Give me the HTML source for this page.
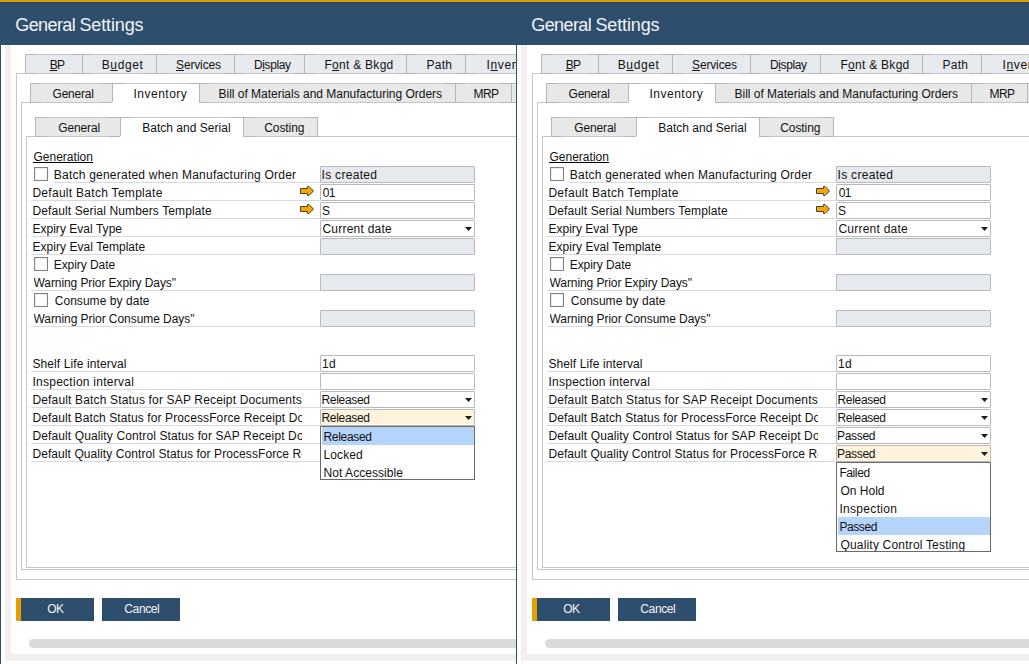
<!DOCTYPE html>
<html><head><meta charset="utf-8"><title>General Settings</title>
<style>
html,body{margin:0;padding:0;background:#fff;}
body{width:1029px;height:664px;overflow:hidden;position:relative;font-family:"Liberation Sans",sans-serif;font-size:12px;color:#121212;}
.dlg{position:absolute;top:0;height:664px;overflow:hidden;background:#fff;}
.dlg *{position:absolute;box-sizing:border-box;white-space:pre;}
.dlg u{position:static;}
.ob0{left:0;top:0;width:600px;height:1px;background:#de9b00;}
.ob1{left:0;top:1px;width:600px;height:1px;background:#e7a100;}
.tb0{left:0;top:2px;width:600px;height:1px;background:#24476e;}
.tbar{left:0;top:3px;width:600px;height:42px;background:#2d4e6c;}
.lb{left:0;top:45px;width:1px;height:619px;background:#2d4e6c;}
.gl{left:5px;top:45px;width:6px;height:616px;background:#f0f0f0;}
.gb{left:5px;top:654px;width:600px;height:7px;background:#f0f0f0;}
.fr{border:1px solid #c6c6c6;border-right:none;width:600px;background:#fff;}
.tab{height:20px;border:1px solid #c6c6c6;border-left-color:#b6b6b6;border-right-color:#b6b6b6;}
.tab::before,.tab::after{content:"";position:absolute;top:-1px;height:20px;box-sizing:border-box;border-top:1px solid #b6b6b6;border-bottom:1px solid #b6b6b6;}
.tab::before{left:-1px;width:11px;}
.tab::after{right:-1px;width:12px;}
.tab.act::before,.tab.act::after{border-bottom-color:#fff;}
.t1{top:54px;background:#e6eaee;}
.t2{top:83px;background:#e8e8e8;}
.t3{top:117px;background:#e8e8e8;}
.tab.act{background:#fff;border-bottom-color:#fff;}
.ul{left:31px;width:289px;height:1px;background:#d6dade;}
.cb{left:34px;width:14px;height:14px;border:1px solid #828282;background:#fff;box-shadow:inset 1px 1px 0 #ececec,inset -1px -1px 0 #f4f4f4;}
.fld{left:320px;width:155px;height:17px;border:1px solid #b6baba;background:#fff;border-radius:1px;}
.fld.dis{background:#e6eaee;}
.fld.foc{background:#fdf3dd;}
.dd{left:465px;width:7px;height:4px;}
.list{left:320px;width:155px;border:1px solid #6a6a6a;background:#fff;}
.sel{left:322px;width:152px;height:18px;background:#b4d4fa;}
.btn{top:598px;height:23px;width:78px;background:#2d4e6c;}
.sb{left:29px;top:639px;width:600px;height:9px;border-radius:4.5px;background:#dadada;}
.arw{left:300px;width:14px;height:10px;}
</style></head><body>
<div class="dlg" style="left:0;width:516px"><div class="ob0"></div><div class="ob1"></div><div class="tb0"></div><div class="tbar"></div><div class="x" style="left:15.30px;top:15px;line-height:20px;height:20px;letter-spacing:-0.600px;font-size:18px;color:#f1f3f5;">General</div><div class="x" style="left:79.40px;top:15px;line-height:20px;height:20px;letter-spacing:-0.129px;font-size:18px;color:#f1f3f5;">Settings</div><div class="lb"></div><div class="gl"></div><div class="gb"></div><div class="fr" style="left:16px;top:73px;height:507px"></div><div class="tab t1" style="left:25px;width:58px"></div><div class="tab t1" style="left:82px;width:75px"></div><div class="tab t1" style="left:156px;width:79px"></div><div class="tab t1" style="left:234px;width:71px"></div><div class="tab t1" style="left:304px;width:103px"></div><div class="tab t1" style="left:406px;width:60px"></div><div class="tab t1" style="left:465px;width:96px"></div><div class="x" style="left:49.70px;top:58px;line-height:14px;height:14px;letter-spacing:-0.600px;"><u>B</u>P</div><div class="x" style="left:101.75px;top:58px;line-height:14px;height:14px;letter-spacing:0.600px;">B<u>u</u>dget</div><div class="x" style="left:176.00px;top:58px;line-height:14px;height:14px;letter-spacing:-0.143px;"><u>S</u>ervices</div><div class="x" style="left:254.00px;top:58px;line-height:14px;height:14px;letter-spacing:-0.375px;">D<u>i</u>splay</div><div class="x" style="left:324.50px;top:58px;line-height:14px;height:14px;letter-spacing:0.270px;">F<u>o</u>nt &amp; Bkgd</div><div class="x" style="left:426.50px;top:58px;line-height:14px;height:14px;letter-spacing:0.267px;">Path</div><div class="x" style="left:486.60px;top:58px;line-height:14px;height:14px;letter-spacing:0.600px;">I<u>n</u>ventory</div><div class="fr" style="left:21px;top:102px;height:468px"></div><div class="tab t2" style="left:30px;width:83px"></div><div class="tab t2 act" style="left:112px;width:88px"></div><div class="tab t2" style="left:199px;width:257px"></div><div class="tab t2" style="left:455px;width:57px"></div><div class="tab t2" style="left:511px;width:90px"></div><div class="x" style="left:52.50px;top:87px;line-height:14px;height:14px;letter-spacing:-0.208px;">General</div><div class="x" style="left:133.50px;top:87px;line-height:14px;height:14px;letter-spacing:0.500px;">Inventory</div><div class="x" style="left:218.50px;top:87px;line-height:14px;height:14px;letter-spacing:-0.012px;">Bill of Materials and Manufacturing Orders</div><div class="x" style="left:473.60px;top:87px;line-height:14px;height:14px;letter-spacing:-0.600px;">MRP</div><div class="fr" style="left:26px;top:136px;height:432px"></div><div class="tab t3" style="left:35px;width:86px"></div><div class="tab t3 act" style="left:120px;width:124px"></div><div class="tab t3" style="left:243px;width:75px"></div><div class="x" style="left:58.25px;top:121px;line-height:14px;height:14px;letter-spacing:-0.125px;">General</div><div class="x" style="left:142.25px;top:121px;line-height:14px;height:14px;letter-spacing:0.017px;">Batch and Serial</div><div class="x" style="left:264.25px;top:121px;line-height:14px;height:14px;letter-spacing:-0.083px;">Costing</div><div class="x" style="left:33.40px;top:150px;line-height:14px;height:14px;letter-spacing:0.022px;">Generation</div><div style="left:33px;top:162px;width:60px;height:1px;background:#000"></div><div class="cb" style="top:167px"></div><div class="x" style="left:53.80px;top:168px;line-height:14px;height:14px;letter-spacing:0.226px;width:248.20px;overflow:hidden;">Batch generated when Manufacturing Order</div><div class="ul" style="top:182px;left:54px;width:266px"></div><div class="fld dis" style="top:166px"></div><div class="x" style="left:321.50px;top:168px;line-height:14px;height:14px;letter-spacing:0.306px;">Is created</div><div class="x" style="left:32.40px;top:186px;line-height:14px;height:14px;letter-spacing:0.290px;width:269.60px;overflow:hidden;">Default Batch Template</div><div class="ul" style="top:200px"></div><div class="fld " style="top:184px"></div><div class="x" style="left:322.65px;top:186px;line-height:14px;height:14px;letter-spacing:-0.600px;">01</div><div class="x" style="left:32.40px;top:204px;line-height:14px;height:14px;letter-spacing:0.113px;width:269.60px;overflow:hidden;">Default Serial Numbers Template</div><div class="ul" style="top:218px"></div><div class="fld " style="top:202px"></div><div class="x" style="left:322.00px;top:204px;line-height:14px;height:14px;letter-spacing:0.000px;">S</div><div class="x" style="left:32.40px;top:222px;line-height:14px;height:14px;letter-spacing:0.033px;width:269.60px;overflow:hidden;">Expiry Eval Type</div><div class="ul" style="top:236px"></div><div class="fld " style="top:220px"></div><div class="x" style="left:322.40px;top:222px;line-height:14px;height:14px;letter-spacing:0.245px;">Current date</div><svg class="dd" style="top:227px" viewBox="0 0 7 4"><path d="M0 0H7L3.5 4Z" fill="#1c1c1c"/></svg><div class="x" style="left:32.50px;top:240px;line-height:14px;height:14px;letter-spacing:0.042px;width:269.50px;overflow:hidden;">Expiry Eval Template</div><div class="ul" style="top:254px"></div><div class="fld dis" style="top:238px"></div><div class="cb" style="top:257px"></div><div class="x" style="left:53.70px;top:258px;line-height:14px;height:14px;letter-spacing:-0.060px;width:248.30px;overflow:hidden;">Expiry Date</div><div class="x" style="left:33.50px;top:276px;line-height:14px;height:14px;letter-spacing:-0.080px;width:268.50px;overflow:hidden;">Warning Prior Expiry Days&quot;</div><div class="ul" style="top:290px"></div><div class="fld dis" style="top:274px"></div><div class="cb" style="top:293px"></div><div class="x" style="left:54.70px;top:294px;line-height:14px;height:14px;letter-spacing:0.050px;width:247.30px;overflow:hidden;">Consume by date</div><div class="x" style="left:33.50px;top:312px;line-height:14px;height:14px;letter-spacing:-0.062px;width:268.50px;overflow:hidden;">Warning Prior Consume Days&quot;</div><div class="ul" style="top:326px"></div><div class="fld dis" style="top:310px"></div><div class="x" style="left:32.40px;top:357px;line-height:14px;height:14px;letter-spacing:0.111px;width:269.60px;overflow:hidden;">Shelf Life interval</div><div class="ul" style="top:371px"></div><div class="fld " style="top:355px"></div><div class="x" style="left:322.00px;top:357px;line-height:14px;height:14px;letter-spacing:0.250px;">1d</div><div class="x" style="left:32.40px;top:375px;line-height:14px;height:14px;letter-spacing:0.267px;width:269.60px;overflow:hidden;">Inspection interval</div><div class="ul" style="top:389px"></div><div class="fld " style="top:373px"></div><div class="x" style="left:32.40px;top:393px;line-height:14px;height:14px;letter-spacing:0.164px;width:269.60px;overflow:hidden;">Default Batch Status for SAP Receipt Documents</div><div class="ul" style="top:407px"></div><div class="fld " style="top:391px"></div><div class="x" style="left:321.50px;top:393px;line-height:14px;height:14px;letter-spacing:-0.321px;">Released</div><svg class="dd" style="top:398px" viewBox="0 0 7 4"><path d="M0 0H7L3.5 4Z" fill="#1c1c1c"/></svg><div class="x" style="left:32.40px;top:411px;line-height:14px;height:14px;letter-spacing:0.105px;width:269.60px;overflow:hidden;">Default Batch Status for ProcessForce Receipt Documents</div><div class="ul" style="top:425px"></div><div class="fld foc" style="top:409px"></div><div class="x" style="left:321.50px;top:411px;line-height:14px;height:14px;letter-spacing:-0.321px;">Released</div><svg class="dd" style="top:416px" viewBox="0 0 7 4"><path d="M0 0H7L3.5 4Z" fill="#1c1c1c"/></svg><div class="x" style="left:32.40px;top:429px;line-height:14px;height:14px;letter-spacing:0.124px;width:269.60px;overflow:hidden;">Default Quality Control Status for SAP Receipt Documents</div><div class="ul" style="top:443px"></div><div class="x" style="left:32.40px;top:447px;line-height:14px;height:14px;letter-spacing:0.084px;width:269.60px;overflow:hidden;">Default Quality Control Status for ProcessForce Receipt Documents</div><div class="ul" style="top:461px"></div><svg class="arw" style="top:186px" viewBox="0 0 14 10"><path d="M0.5 2.5H7.5V0.5H9L13.5 5L9 9.5H7.5V7.5H0.5Z" fill="#f2a900" stroke="#4a3e2c" stroke-width="1" stroke-linejoin="miter"/></svg><svg class="arw" style="top:204px" viewBox="0 0 14 10"><path d="M0.5 2.5H7.5V0.5H9L13.5 5L9 9.5H7.5V7.5H0.5Z" fill="#f2a900" stroke="#4a3e2c" stroke-width="1" stroke-linejoin="miter"/></svg><div class="list" style="top:426px;height:54px"></div><div class="sel" style="top:427px"></div><div class="x" style="left:323.50px;top:430px;line-height:14px;height:14px;letter-spacing:-0.321px;">Released</div><div class="x" style="left:323.50px;top:448px;line-height:14px;height:14px;letter-spacing:0.100px;">Locked</div><div class="x" style="left:323.50px;top:466px;line-height:14px;height:14px;letter-spacing:0.058px;">Not Accessible</div><div class="btn" style="left:16px;border-left:5px solid #e5a000"></div><div class="btn" style="left:102px"></div><div class="x" style="left:47.17px;top:602px;line-height:14px;height:14px;letter-spacing:-0.600px;color:#f4f4f4;">OK</div><div class="x" style="left:124.30px;top:602px;line-height:14px;height:14px;letter-spacing:-0.380px;color:#f4f4f4;">Cancel</div><div class="sb"></div></div>
<div class="dlg" style="left:516px;width:513px"><div class="ob0"></div><div class="ob1"></div><div class="tb0"></div><div class="tbar"></div><div class="x" style="left:15.30px;top:15px;line-height:20px;height:20px;letter-spacing:-0.600px;font-size:18px;color:#f1f3f5;">General</div><div class="x" style="left:79.40px;top:15px;line-height:20px;height:20px;letter-spacing:-0.129px;font-size:18px;color:#f1f3f5;">Settings</div><div class="lb"></div><div class="gl"></div><div class="gb"></div><div class="fr" style="left:16px;top:73px;height:507px"></div><div class="tab t1" style="left:25px;width:58px"></div><div class="tab t1" style="left:82px;width:75px"></div><div class="tab t1" style="left:156px;width:79px"></div><div class="tab t1" style="left:234px;width:71px"></div><div class="tab t1" style="left:304px;width:103px"></div><div class="tab t1" style="left:406px;width:60px"></div><div class="tab t1" style="left:465px;width:96px"></div><div class="x" style="left:49.70px;top:58px;line-height:14px;height:14px;letter-spacing:-0.600px;"><u>B</u>P</div><div class="x" style="left:101.75px;top:58px;line-height:14px;height:14px;letter-spacing:0.600px;">B<u>u</u>dget</div><div class="x" style="left:176.00px;top:58px;line-height:14px;height:14px;letter-spacing:-0.143px;"><u>S</u>ervices</div><div class="x" style="left:254.00px;top:58px;line-height:14px;height:14px;letter-spacing:-0.375px;">D<u>i</u>splay</div><div class="x" style="left:324.50px;top:58px;line-height:14px;height:14px;letter-spacing:0.270px;">F<u>o</u>nt &amp; Bkgd</div><div class="x" style="left:426.50px;top:58px;line-height:14px;height:14px;letter-spacing:0.267px;">Path</div><div class="x" style="left:486.60px;top:58px;line-height:14px;height:14px;letter-spacing:0.600px;">I<u>n</u>ventory</div><div class="fr" style="left:21px;top:102px;height:468px"></div><div class="tab t2" style="left:30px;width:83px"></div><div class="tab t2 act" style="left:112px;width:88px"></div><div class="tab t2" style="left:199px;width:257px"></div><div class="tab t2" style="left:455px;width:57px"></div><div class="tab t2" style="left:511px;width:90px"></div><div class="x" style="left:52.50px;top:87px;line-height:14px;height:14px;letter-spacing:-0.208px;">General</div><div class="x" style="left:133.50px;top:87px;line-height:14px;height:14px;letter-spacing:0.500px;">Inventory</div><div class="x" style="left:218.50px;top:87px;line-height:14px;height:14px;letter-spacing:-0.012px;">Bill of Materials and Manufacturing Orders</div><div class="x" style="left:473.60px;top:87px;line-height:14px;height:14px;letter-spacing:-0.600px;">MRP</div><div class="fr" style="left:26px;top:136px;height:432px"></div><div class="tab t3" style="left:35px;width:86px"></div><div class="tab t3 act" style="left:120px;width:124px"></div><div class="tab t3" style="left:243px;width:75px"></div><div class="x" style="left:58.25px;top:121px;line-height:14px;height:14px;letter-spacing:-0.125px;">General</div><div class="x" style="left:142.25px;top:121px;line-height:14px;height:14px;letter-spacing:0.017px;">Batch and Serial</div><div class="x" style="left:264.25px;top:121px;line-height:14px;height:14px;letter-spacing:-0.083px;">Costing</div><div class="x" style="left:33.40px;top:150px;line-height:14px;height:14px;letter-spacing:0.022px;">Generation</div><div style="left:33px;top:162px;width:60px;height:1px;background:#000"></div><div class="cb" style="top:167px"></div><div class="x" style="left:53.80px;top:168px;line-height:14px;height:14px;letter-spacing:0.226px;width:248.20px;overflow:hidden;">Batch generated when Manufacturing Order</div><div class="ul" style="top:182px;left:54px;width:266px"></div><div class="fld dis" style="top:166px"></div><div class="x" style="left:321.50px;top:168px;line-height:14px;height:14px;letter-spacing:0.306px;">Is created</div><div class="x" style="left:32.40px;top:186px;line-height:14px;height:14px;letter-spacing:0.290px;width:269.60px;overflow:hidden;">Default Batch Template</div><div class="ul" style="top:200px"></div><div class="fld " style="top:184px"></div><div class="x" style="left:322.65px;top:186px;line-height:14px;height:14px;letter-spacing:-0.600px;">01</div><div class="x" style="left:32.40px;top:204px;line-height:14px;height:14px;letter-spacing:0.113px;width:269.60px;overflow:hidden;">Default Serial Numbers Template</div><div class="ul" style="top:218px"></div><div class="fld " style="top:202px"></div><div class="x" style="left:322.00px;top:204px;line-height:14px;height:14px;letter-spacing:0.000px;">S</div><div class="x" style="left:32.40px;top:222px;line-height:14px;height:14px;letter-spacing:0.033px;width:269.60px;overflow:hidden;">Expiry Eval Type</div><div class="ul" style="top:236px"></div><div class="fld " style="top:220px"></div><div class="x" style="left:322.40px;top:222px;line-height:14px;height:14px;letter-spacing:0.245px;">Current date</div><svg class="dd" style="top:227px" viewBox="0 0 7 4"><path d="M0 0H7L3.5 4Z" fill="#1c1c1c"/></svg><div class="x" style="left:32.50px;top:240px;line-height:14px;height:14px;letter-spacing:0.042px;width:269.50px;overflow:hidden;">Expiry Eval Template</div><div class="ul" style="top:254px"></div><div class="fld dis" style="top:238px"></div><div class="cb" style="top:257px"></div><div class="x" style="left:53.70px;top:258px;line-height:14px;height:14px;letter-spacing:-0.060px;width:248.30px;overflow:hidden;">Expiry Date</div><div class="x" style="left:33.50px;top:276px;line-height:14px;height:14px;letter-spacing:-0.080px;width:268.50px;overflow:hidden;">Warning Prior Expiry Days&quot;</div><div class="ul" style="top:290px"></div><div class="fld dis" style="top:274px"></div><div class="cb" style="top:293px"></div><div class="x" style="left:54.70px;top:294px;line-height:14px;height:14px;letter-spacing:0.050px;width:247.30px;overflow:hidden;">Consume by date</div><div class="x" style="left:33.50px;top:312px;line-height:14px;height:14px;letter-spacing:-0.062px;width:268.50px;overflow:hidden;">Warning Prior Consume Days&quot;</div><div class="ul" style="top:326px"></div><div class="fld dis" style="top:310px"></div><div class="x" style="left:32.40px;top:357px;line-height:14px;height:14px;letter-spacing:0.111px;width:269.60px;overflow:hidden;">Shelf Life interval</div><div class="ul" style="top:371px"></div><div class="fld " style="top:355px"></div><div class="x" style="left:322.00px;top:357px;line-height:14px;height:14px;letter-spacing:0.250px;">1d</div><div class="x" style="left:32.40px;top:375px;line-height:14px;height:14px;letter-spacing:0.267px;width:269.60px;overflow:hidden;">Inspection interval</div><div class="ul" style="top:389px"></div><div class="fld " style="top:373px"></div><div class="x" style="left:32.40px;top:393px;line-height:14px;height:14px;letter-spacing:0.164px;width:269.60px;overflow:hidden;">Default Batch Status for SAP Receipt Documents</div><div class="ul" style="top:407px"></div><div class="fld " style="top:391px"></div><div class="x" style="left:321.50px;top:393px;line-height:14px;height:14px;letter-spacing:-0.321px;">Released</div><svg class="dd" style="top:398px" viewBox="0 0 7 4"><path d="M0 0H7L3.5 4Z" fill="#1c1c1c"/></svg><div class="x" style="left:32.40px;top:411px;line-height:14px;height:14px;letter-spacing:0.105px;width:269.60px;overflow:hidden;">Default Batch Status for ProcessForce Receipt Documents</div><div class="ul" style="top:425px"></div><div class="fld " style="top:409px"></div><div class="x" style="left:321.50px;top:411px;line-height:14px;height:14px;letter-spacing:-0.321px;">Released</div><svg class="dd" style="top:416px" viewBox="0 0 7 4"><path d="M0 0H7L3.5 4Z" fill="#1c1c1c"/></svg><div class="x" style="left:32.40px;top:429px;line-height:14px;height:14px;letter-spacing:0.124px;width:269.60px;overflow:hidden;">Default Quality Control Status for SAP Receipt Documents</div><div class="ul" style="top:443px"></div><div class="fld " style="top:427px"></div><div class="x" style="left:321.10px;top:429px;line-height:14px;height:14px;letter-spacing:-0.340px;">Passed</div><svg class="dd" style="top:434px" viewBox="0 0 7 4"><path d="M0 0H7L3.5 4Z" fill="#1c1c1c"/></svg><div class="x" style="left:32.40px;top:447px;line-height:14px;height:14px;letter-spacing:0.084px;width:269.60px;overflow:hidden;">Default Quality Control Status for ProcessForce Receipt Documents</div><div class="ul" style="top:461px"></div><div class="fld foc" style="top:445px"></div><div class="x" style="left:321.10px;top:447px;line-height:14px;height:14px;letter-spacing:-0.340px;">Passed</div><svg class="dd" style="top:452px" viewBox="0 0 7 4"><path d="M0 0H7L3.5 4Z" fill="#1c1c1c"/></svg><svg class="arw" style="top:186px" viewBox="0 0 14 10"><path d="M0.5 2.5H7.5V0.5H9L13.5 5L9 9.5H7.5V7.5H0.5Z" fill="#f2a900" stroke="#4a3e2c" stroke-width="1" stroke-linejoin="miter"/></svg><svg class="arw" style="top:204px" viewBox="0 0 14 10"><path d="M0.5 2.5H7.5V0.5H9L13.5 5L9 9.5H7.5V7.5H0.5Z" fill="#f2a900" stroke="#4a3e2c" stroke-width="1" stroke-linejoin="miter"/></svg><div class="list" style="top:462px;height:90px"></div><div class="sel" style="top:517px"></div><div class="x" style="left:323.40px;top:466px;line-height:14px;height:14px;letter-spacing:-0.400px;">Failed</div><div class="x" style="left:324.40px;top:484px;line-height:14px;height:14px;letter-spacing:0.017px;">On Hold</div><div class="x" style="left:323.40px;top:502px;line-height:14px;height:14px;letter-spacing:0.322px;">Inspection</div><div class="x" style="left:323.40px;top:520px;line-height:14px;height:14px;letter-spacing:-0.400px;">Passed</div><div style="left:321px;top:535px;width:153px;height:16px;overflow:hidden"><div class="x" style="left:-321px;margin-left:324.40px;top:3px;line-height:14px;height:14px;letter-spacing:0.191px;">Quality Control Testing</div></div><div class="btn" style="left:16px;border-left:5px solid #e5a000"></div><div class="btn" style="left:102px"></div><div class="x" style="left:47.17px;top:602px;line-height:14px;height:14px;letter-spacing:-0.600px;color:#f4f4f4;">OK</div><div class="x" style="left:124.30px;top:602px;line-height:14px;height:14px;letter-spacing:-0.380px;color:#f4f4f4;">Cancel</div><div class="sb"></div></div>
</body></html>
